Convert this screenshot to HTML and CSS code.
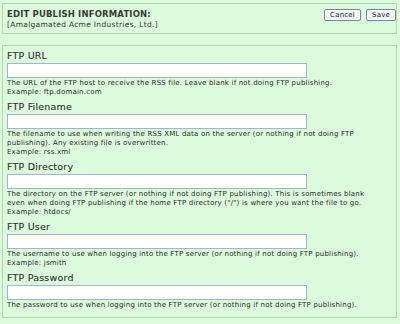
FILE: index.html
```html
<!DOCTYPE html>
<html>

<head>
    <title>Edit Publish Information</title>
    <link rel="stylesheet" href="styles.css">
</head>

<body>
    <div class="header">
        <div class="heading">
            <div class="title">EDIT PUBLISH INFORMATION:</div>
            <div class="subtitle">[Amalgamated Acme Industries, Ltd.]</div>
        </div>
        <div class="actions">
            <button class="btn">Cancel</button>
            <button class="btn">Save</button>
        </div>
    </div>

    <div class="panel">
        <div class="field">
            <label for="ftpUrl">FTP URL</label>
            <input type="text" id="ftpUrl">
            <div class="help">The URL of the FTP host to receive the RSS file. Leave blank if not doing FTP publishing.<br>Example: ftp.domain.com</div>
        </div>
        <div class="field">
            <label for="ftpFilename">FTP Filename</label>
            <input type="text" id="ftpFilename">
            <div class="help">The filename to use when writing the RSS XML data on the server (or nothing if not doing FTP<br>publishing). Any existing file is overwritten.<br>Example: rss.xml</div>
        </div>
        <div class="field">
            <label for="ftpDirectory">FTP Directory</label>
            <input type="text" id="ftpDirectory">
            <div class="help">The directory on the FTP server (or nothing if not doing FTP publishing). This is sometimes blank<br>even when doing FTP publishing if the home FTP directory ("/") is where you want the file to go.<br>Example: htdocs/</div>
        </div>
        <div class="field">
            <label for="ftpUser">FTP User</label>
            <input type="text" id="ftpUser">
            <div class="help">The username to use when logging into the FTP server (or nothing if not doing FTP publishing).<br>Example: jsmith</div>
        </div>
        <div class="field">
            <label for="ftpPassword">FTP Password</label>
            <input type="password" id="ftpPassword">
            <div class="help">The password to use when logging into the FTP server (or nothing if not doing FTP publishing).</div>
        </div>
    </div>
</body>

</html>
```

FILE: styles.css
```css
body {
    margin: 3px 3px 0 2px;
    background-color: #dcfadc;
    font-family: "DejaVu Sans", Verdana, sans-serif;
    color: #333;
}

.header {
    display: flex;
    justify-content: space-between;
    align-items: flex-start;
    height: 31px;
    box-sizing: border-box;
    padding: 5px 0 0 4px;
    border: 1px solid #b4d8b4;
}

.title {
    font-size: 8.5px;
    font-weight: bold;
    line-height: 11px;
    letter-spacing: 0.15px;
    color: #3a3a3a;
}

.subtitle {
    font-size: 7.5px;
    line-height: 9px;
    letter-spacing: 0.3px;
}

.actions {
    display: flex;
    gap: 5px;
}

.btn {
    height: 12px;
    padding: 0 5px;
    font-family: "DejaVu Sans", Verdana, sans-serif;
    font-size: 7px;
    letter-spacing: 0.2px;
    color: #222;
    background: linear-gradient(#ffffff, #e9edf2);
    border: 1px solid #6f86a6;
    border-radius: 2px;
    box-shadow: inset 0 0 0 1px #ffffff;
    cursor: pointer;
}

.panel {
    margin-top: 11px;
    padding: 0 4px 7px 4px;
    border: 1px solid #b4d8b4;
}

.field label {
    display: block;
    padding-top: 3px;
    font-size: 9.5px;
    line-height: 14px;
    letter-spacing: 0.2px;
    color: #2e2e2e;
    -webkit-text-stroke: 0.1px #2e2e2e;
}

.field input {
    display: block;
    width: 300px;
    height: 15px;
    box-sizing: border-box;
    margin: 0;
    padding: 0 2px;
    border: 1px solid #a2b6ca;
    background-color: #fff;
}

.help {
    margin-top: 1px;
    font-size: 7px;
    line-height: 9px;
    letter-spacing: 0.2px;
    white-space: nowrap;
    color: #2a2a2a;
}
```
